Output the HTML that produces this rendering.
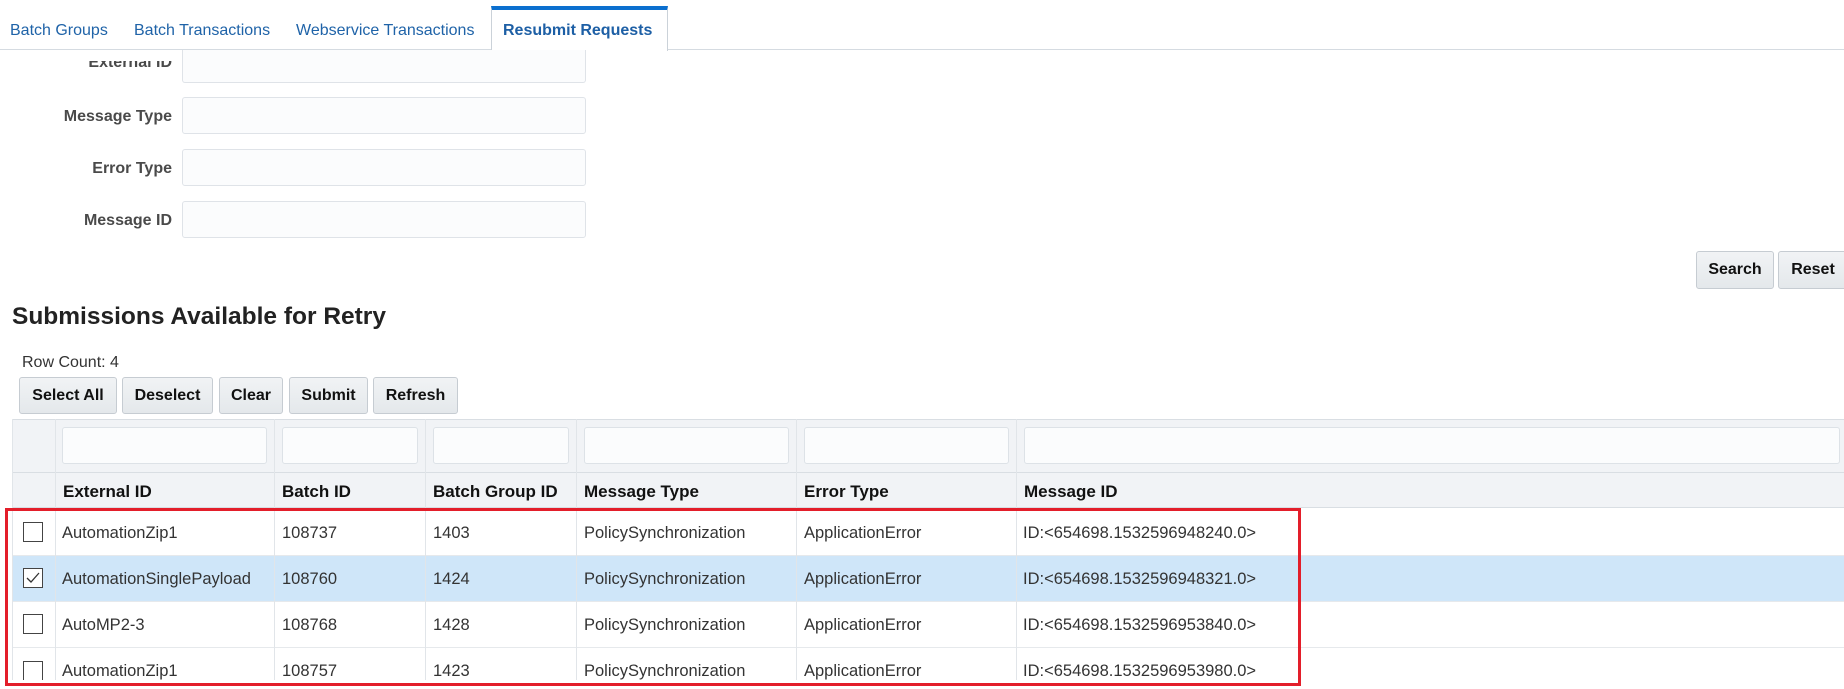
<!DOCTYPE html>
<html><head><meta charset="utf-8"><style>
*{box-sizing:border-box;margin:0;padding:0}
body{width:1844px;height:689px;overflow:hidden;background:#fff;font-family:"Liberation Sans",Arial,sans-serif;color:#333;position:relative}
.a{position:absolute}
.tab{position:absolute;top:22px;font-size:16px;color:#1f63a8;white-space:nowrap}
.inp{position:absolute;left:182px;width:404px;height:37px;background:#fbfcfd;border:1px solid #dfe3e8;border-radius:3px}
.lbl{position:absolute;right:1672px;font-size:16px;font-weight:bold;color:#4a4a4a;white-space:nowrap}
.btn{position:absolute;height:37px;background:linear-gradient(#f1f3f5,#e4e8eb);border:1px solid #c6ccd2;border-radius:3px;font-size:16px;font-weight:bold;color:#111;display:flex;align-items:center;justify-content:center}
.vl{position:absolute;top:419px;width:1px;height:270px;background:#e1e5e9}
.fi{position:absolute;top:427px;height:37px;background:#fbfcfd;border:1px solid #dde2e7;border-radius:3px}
.th{position:absolute;top:482px;font-size:17px;font-weight:bold;color:#111;white-space:nowrap}
.td{position:absolute;font-size:16.5px;color:#333;white-space:nowrap}
.cb{position:absolute;left:23px;width:20px;height:20px;border:1px solid #444;background:#fff}
.hl{position:absolute;left:12px;width:1832px;height:1px;background:#e6e9ec}
</style></head><body>
<div class="tab" style="left:10px">Batch Groups</div>
<div class="tab" style="left:134px">Batch Transactions</div>
<div class="tab" style="left:296px">Webservice Transactions</div>
<div class="a" style="left:0;top:49px;width:1844px;height:1px;background:#d5dbe1"></div>
<div class="a" style="left:491px;top:6px;width:177px;height:45px;background:#fff;border-left:1px solid #cbd2d9;border-right:1px solid #cbd2d9;border-top:4px solid #0b6fcf"></div>
<div class="tab" style="left:503px;font-weight:bold;color:#1d5fa5">Resubmit Requests</div>
<div class="inp" style="top:50px;height:33px;border-top:none;border-radius:0 0 3px 3px"></div>
<div class="lbl" style="top:54px;clip-path:inset(7px 0 0 0)">External ID</div>
<div class="inp" style="top:97px"></div><div class="lbl" style="top:108px">Message Type</div>
<div class="inp" style="top:149px"></div><div class="lbl" style="top:160px">Error Type</div>
<div class="inp" style="top:201px"></div><div class="lbl" style="top:212px">Message ID</div>
<div class="btn" style="left:1696px;top:251px;width:78px;height:38px">Search</div>
<div class="btn" style="left:1778px;top:251px;width:70px;height:38px">Reset</div>
<div class="a" style="left:12px;top:303px;font-size:24.5px;font-weight:bold;color:#222">Submissions Available for Retry</div>
<div class="a" style="left:22px;top:354px;font-size:16px;color:#333">Row Count: 4</div>
<div class="btn" style="left:19px;top:377px;width:98px">Select All</div>
<div class="btn" style="left:122px;top:377px;width:91px">Deselect</div>
<div class="btn" style="left:219px;top:377px;width:64px">Clear</div>
<div class="btn" style="left:289px;top:377px;width:79px">Submit</div>
<div class="btn" style="left:373px;top:377px;width:85px">Refresh</div>
<div class="a" style="left:12px;top:419px;width:1832px;height:89px;background:#f1f3f6;border-top:1px solid #d9dee3"></div>
<div class="a" style="left:12px;top:472px;width:1832px;height:1px;background:#d9dee3"></div>
<div class="a" style="left:12px;top:507px;width:1832px;height:1px;background:#d9dee3"></div>
<div class="a" style="left:12px;top:555px;width:1832px;height:46px;background:#cfe6f9"></div>
<div class="hl" style="top:555px"></div><div class="hl" style="top:601px"></div><div class="hl" style="top:647px"></div>
<div class="vl" style="left:12px"></div>
<div class="vl" style="left:55px"></div><div class="vl" style="left:274px"></div><div class="vl" style="left:425px"></div>
<div class="vl" style="left:576px"></div><div class="vl" style="left:796px"></div><div class="vl" style="left:1016px"></div>
<div class="fi" style="left:62px;width:205px"></div>
<div class="fi" style="left:282px;width:136px"></div>
<div class="fi" style="left:433px;width:136px"></div>
<div class="fi" style="left:584px;width:205px"></div>
<div class="fi" style="left:804px;width:205px"></div>
<div class="fi" style="left:1024px;width:816px"></div>
<div class="th" style="left:63px">External ID</div>
<div class="th" style="left:282px">Batch ID</div>
<div class="th" style="left:433px">Batch Group ID</div>
<div class="th" style="left:584px">Message Type</div>
<div class="th" style="left:804px">Error Type</div>
<div class="th" style="left:1024px">Message ID</div>
<div class="cb" style="top:522px"></div>
<div class="td" style="top:524px;left:62px">AutomationZip1</div><div class="td" style="top:524px;left:282px">108737</div><div class="td" style="top:524px;left:433px">1403</div><div class="td" style="top:524px;left:584px">PolicySynchronization</div><div class="td" style="top:524px;left:804px">ApplicationError</div><div class="td" style="top:524px;left:1023px">ID:&lt;654698.1532596948240.0&gt;</div>
<div class="cb" style="top:568px"><svg width="18" height="18" viewBox="0 0 18 18" style="position:absolute;left:0;top:0"><path d="M3 9 L7 13 L15 4" fill="none" stroke="#333" stroke-width="1.3"/></svg></div>
<div class="td" style="top:570px;left:62px">AutomationSinglePayload</div><div class="td" style="top:570px;left:282px">108760</div><div class="td" style="top:570px;left:433px">1424</div><div class="td" style="top:570px;left:584px">PolicySynchronization</div><div class="td" style="top:570px;left:804px">ApplicationError</div><div class="td" style="top:570px;left:1023px">ID:&lt;654698.1532596948321.0&gt;</div>
<div class="cb" style="top:614px"></div>
<div class="td" style="top:616px;left:62px">AutoMP2-3</div><div class="td" style="top:616px;left:282px">108768</div><div class="td" style="top:616px;left:433px">1428</div><div class="td" style="top:616px;left:584px">PolicySynchronization</div><div class="td" style="top:616px;left:804px">ApplicationError</div><div class="td" style="top:616px;left:1023px">ID:&lt;654698.1532596953840.0&gt;</div>
<div class="cb" style="top:661px;height:19px;border-bottom:none"></div>
<div class="td" style="top:662px;left:62px">AutomationZip1</div><div class="td" style="top:662px;left:282px">108757</div><div class="td" style="top:662px;left:433px">1423</div><div class="td" style="top:662px;left:584px">PolicySynchronization</div><div class="td" style="top:662px;left:804px">ApplicationError</div><div class="td" style="top:662px;left:1023px">ID:&lt;654698.1532596953980.0&gt;</div>
<div class="a" style="left:0;top:680px;width:1844px;height:9px;background:#fff"></div>
<div class="a" style="left:5px;top:508px;width:1296px;height:178px;border:3px solid #e31e2a"></div>
</body></html>
